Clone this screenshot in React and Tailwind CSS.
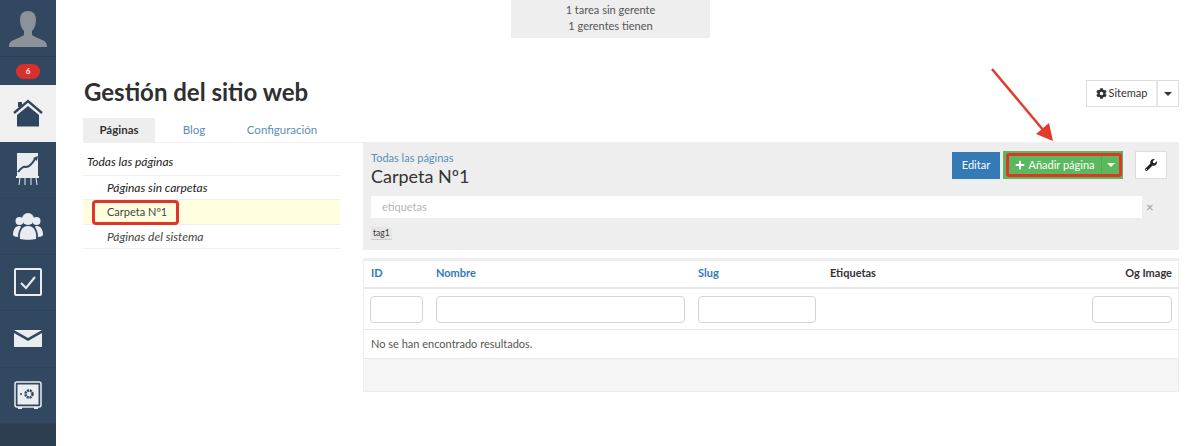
import { FaCog, FaPlus, FaWrench } from 'react-icons/fa';

function AvatarIcon() {
  return (
    <svg width="38" height="36" viewBox="0 0 38 36" fill="#8b929a">
      <path d="M19 0c5 0 8 3 8 9 0 5-2 9-4 11v4c1 1 4 2 8 4 5 2 7 3 7 8H0c0-5 2-6 7-8 4-2 7-3 8-4v-4c-2-2-4-6-4-11 0-6 3-9 8-9z" />
    </svg>
  );
}

function HomeIcon() {
  return (
    <svg width="30" height="28" viewBox="0 0 30 28">
      <path d="M1 14 15 2l14 12" fill="none" stroke="#2f4560" strokeWidth="2.4" />
      <path d="M5 3h4v5H5z" fill="#2f4560" />
      <path d="M4 16 15 7l11 9v11.500H4z" fill="#2f4560" />
    </svg>
  );
}

function ChartIcon() {
  return (
    <svg width="24" height="34" viewBox="0 0 24 34">
      <path d="M1 1h21v23H1z" fill="#e9edf0" />
      <path d="M2 20c3-4 5-6 8-5 3 0 6-3 9-8" fill="none" stroke="#2f4560" strokeWidth="2" />
      <path d="M17 6l5-2-1 5z" fill="#2f4560" />
      <path d="M0 24h23v2H0z" fill="#e9edf0" />
      <path d="M4 26 3 33M9 26v7M15 26v7M20 26l1 7" stroke="#e9edf0" strokeWidth="1" />
    </svg>
  );
}

function TeamIcon() {
  return (
    <svg width="30" height="28" viewBox="0 0 30 28" fill="#e9edf0">
      <circle cx="15" cy="7" r="6" />
      <circle cx="6.500" cy="9" r="4" />
      <circle cx="23.500" cy="9" r="4" />
      <path d="M7 27c-1-7 2-13 8-13s9 6 8 13c-4 1-12 1-16 0z" />
      <path d="M5 25c-3 0-4-1-5-2 0-5 2-9 6-9 1 0 2 0 2 1-2 3-3 6-3 10zM25 25c3 0 4-1 5-2 0-5-2-9-6-9-1 0-2 0-2 1 2 3 3 6 3 10z" />
    </svg>
  );
}

function CheckIcon() {
  return (
    <svg width="28" height="28" viewBox="0 0 28 28">
      <rect x="1" y="1" width="26" height="26" rx="1" fill="none" stroke="#e9edf0" strokeWidth="2" />
      <path d="M7 15l5 5 9-11" fill="none" stroke="#e9edf0" strokeWidth="2" />
    </svg>
  );
}

function MailIcon() {
  return (
    <svg width="28" height="17" viewBox="0 0 28 17" fill="#e9edf0">
      <path d="M0 0l14 8L28 0zM0 3v14h28V3L14 11z" />
    </svg>
  );
}

function SafeIcon() {
  return (
    <svg width="28" height="29" viewBox="0 0 28 29">
      <rect x="1" y="1" width="26" height="25" rx="2" fill="none" stroke="#e9edf0" strokeWidth="1.500" />
      <rect x="3.500" y="3.500" width="21" height="20" fill="#e9edf0" />
      <circle cx="15" cy="13" r="3.500" fill="none" stroke="#2f4560" strokeWidth="2.500" strokeDasharray="2 0.800" />
      <circle cx="7" cy="13" r="1" fill="#2f4560" />
      <path d="M4 26h4v2H4zM20 26h4v2h-4z" fill="#e9edf0" />
    </svg>
  );
}

function Sidebar() {
  const items = [
    { key: 'home', icon: <HomeIcon />, active: true },
    { key: 'chart', icon: <ChartIcon /> },
    { key: 'team', icon: <TeamIcon /> },
    { key: 'check', icon: <CheckIcon /> },
    { key: 'mail', icon: <MailIcon /> },
    { key: 'safe', icon: <SafeIcon /> },
  ];

  return (
    <aside className="w-[56px] shrink-0 bg-[#2c3e50] flex flex-col h-[446px]">
      <div className="h-[57px] bg-[#324860] border-b border-[#2c3e50] flex items-center justify-center pt-[1px]">
        <AvatarIcon />
      </div>
      <div className="h-[28px] bg-[#324860] flex items-center justify-center">
        <span className="w-[24px] h-[15px] rounded-full bg-[#d9302c] text-white text-[8px] font-bold leading-[15px] text-center">6</span>
      </div>
      {items.map((item) => (
        <div
          key={item.key}
          className={`h-[56.500px] flex items-center justify-center ${item.active ? 'bg-[#f0f0f0]' : 'bg-[#324860] border-b border-[#2e4359]'}`}
        >
          {item.icon}
        </div>
      ))}
    </aside>
  );
}

function Arrow() {
  return (
    <svg className="absolute left-[985px] top-[62px]" width="75" height="85" viewBox="0 0 75 85">
      <path d="M7 7 59 69" stroke="#e23b2e" strokeWidth="2.500" fill="none" />
      <path d="M68 79 51 72 64 61z" fill="#e23b2e" />
    </svg>
  );
}

function Caret({ color }) {
  return <span className={`w-0 h-0 border-x-[4px] border-x-transparent border-t-[4px] ${color}`} />;
}

function Table() {
  const rowGrid = 'grid grid-cols-[53px_249px_118px_1fr_80px] gap-x-[13px] pl-[6px] pr-[6px]';
  const inputCls = 'h-[27px] border border-[#d4d4d4] rounded bg-white';

  return (
    <div className="mt-[8px] border-x border-b border-t-[3px] border-[#eeeeee] text-[11px]">
      <div className={`${rowGrid} h-[28px] pb-[1px] items-center font-bold border-b-2 border-[#e8e8e8]`}>
        <span className="text-[#337ab7] pl-[1px]">ID</span>
        <span className="text-[#337ab7]">Nombre</span>
        <span className="text-[#337ab7]">Slug</span>
        <span className="text-[#333333] pl-[1px]">Etiquetas</span>
        <span className="text-[#333333] text-right">Og Image</span>
      </div>
      <div className={`${rowGrid} h-[41px] items-center border-b border-[#e8e8e8]`}>
        <div className={inputCls} />
        <div className={inputCls} />
        <div className={inputCls} />
        <div />
        <div className={inputCls} />
      </div>
      <div className="h-[29px] flex items-center px-[7px] text-[#555555] border-b border-[#e8e8e8]">
        No se han encontrado resultados.
      </div>
      <div className="h-[32px] bg-[#f5f5f5]" />
    </div>
  );
}

export default function App() {
  return (
    <div
      className="relative w-[1199px] h-[446px] overflow-hidden flex bg-white text-[#333333]"
      style={{ fontFamily: 'Lato, "Liberation Sans", sans-serif' }}
    >
      <Sidebar />
      <main className="flex-1 min-w-0 pl-[27px] pr-[20px]">
        <div className="ml-[428px] w-[199px] h-[38px] bg-[#eeeeee] text-center text-[11px] leading-[16px] text-[#555555] pt-[2px]">
          <div>1 tarea sin gerente</div>
          <div>1 gerentes tienen</div>
        </div>

        <div className="flex items-start justify-between mt-[42px] pl-[1px]">
          <h1 className="text-[24px] font-bold leading-[24px] text-[#2f2f2f]">Gestión del sitio web</h1>
          <div className="flex h-[27px] border border-[#dddddd] text-[11px] text-[#333333]">
            <div className="w-[71px] flex items-center justify-center gap-[2px] border-r-2 border-[#e6e6e6]">
              <FaCog className="text-[11px]" /> Sitemap
            </div>
            <div className="w-[20px] flex items-center justify-center">
              <Caret color="border-t-[#333333]" />
            </div>
          </div>
        </div>

        <div className="flex items-stretch h-[25px] mt-[11px] border-b border-[#f0f0f0] text-[11.500px]">
          <div className="w-[72px] bg-[#eeeeee] font-bold flex items-center justify-center">Páginas</div>
          <div className="w-[78px] text-[#5b8db8] flex items-center justify-center">Blog</div>
          <div className="w-[98px] text-[#5b8db8] flex items-center justify-center">Configuración</div>
        </div>

        <div className="flex gap-[23px]">
          <ul className="w-[257px] shrink-0 text-[12px] italic">
            <li className="h-[33px] pl-[4px] pt-[6px] flex items-center border-b border-[#f0f0f0] text-[#222222]">Todas las páginas</li>
            <li className="h-[24px] pl-[24px] flex items-center border-b border-[#f0f0f0] text-[#222222]">Páginas sin carpetas</li>
            <li className="relative h-[25px] pl-[24px] flex items-center border-b border-[#f0f0f0] bg-[#ffffe0] not-italic text-[11px] text-[#444444]">
              Carpeta Nº1
              <span className="absolute left-[9px] top-0 w-[87px] h-[25px] border-[3px] border-[#e0352b] rounded-[4px]" />
            </li>
            <li className="h-[24px] pl-[24px] pt-[1px] flex items-center border-b border-[#f0f0f0] text-[#444444]">Páginas del sistema</li>
          </ul>

          <section className="flex-1 min-w-0">
            <div className="h-[107px] bg-[#eeeeee] px-[8px] pt-[8px]">
              <div className="flex items-start justify-between">
                <div>
                  <div className="text-[11px] leading-[14px] text-[#5b8db8]">Todas las páginas</div>
                  <div className="text-[18px] leading-[23px] text-[#333333]">Carpeta Nº1</div>
                </div>
                <div className="flex items-start pr-[4px]">
                  <div className="mt-[1px] w-[48px] h-[27px] bg-[#337ab7] text-white text-[11px] flex items-center justify-center">Editar</div>
                  <div className="ml-[3px] h-[28px] w-[120px] bg-[#5cb85c] pl-[3px] pr-[1px] py-[2px]">
                    <div className="h-full border-[3px] border-[#e0352b] rounded-[3px] flex text-white text-[11px]">
                      <div className="flex-1 flex items-center justify-center gap-[3px] border-r border-[#4cae4c]">
                        <FaPlus className="text-[10px]" /> Añadir página
                      </div>
                      <div className="w-[17px] flex items-center justify-center">
                        <Caret color="border-t-white" />
                      </div>
                    </div>
                  </div>
                  <div className="ml-[12px] w-[32px] h-[28px] bg-white border border-[#dddddd] flex items-center justify-center">
                    <FaWrench className="text-[12px] text-[#222222]" />
                  </div>
                </div>
              </div>
              <div className="flex items-center mt-[8px]">
                <div className="w-[771px] h-[22px] bg-white pl-[11px] flex items-center text-[11px] text-[#b5b5b5]">etiquetas</div>
                <span className="ml-[4px] text-[13px] leading-none text-[#999999]">×</span>
              </div>
              <div className="mt-[7px] inline-block text-[8.500px] leading-[12px] text-[#333333] bg-[#e6e6e6] border-b border-[#cccccc] px-[2px]">tag1</div>
            </div>
            <Table />
          </section>
        </div>
      </main>
      <Arrow />
    </div>
  );
}
